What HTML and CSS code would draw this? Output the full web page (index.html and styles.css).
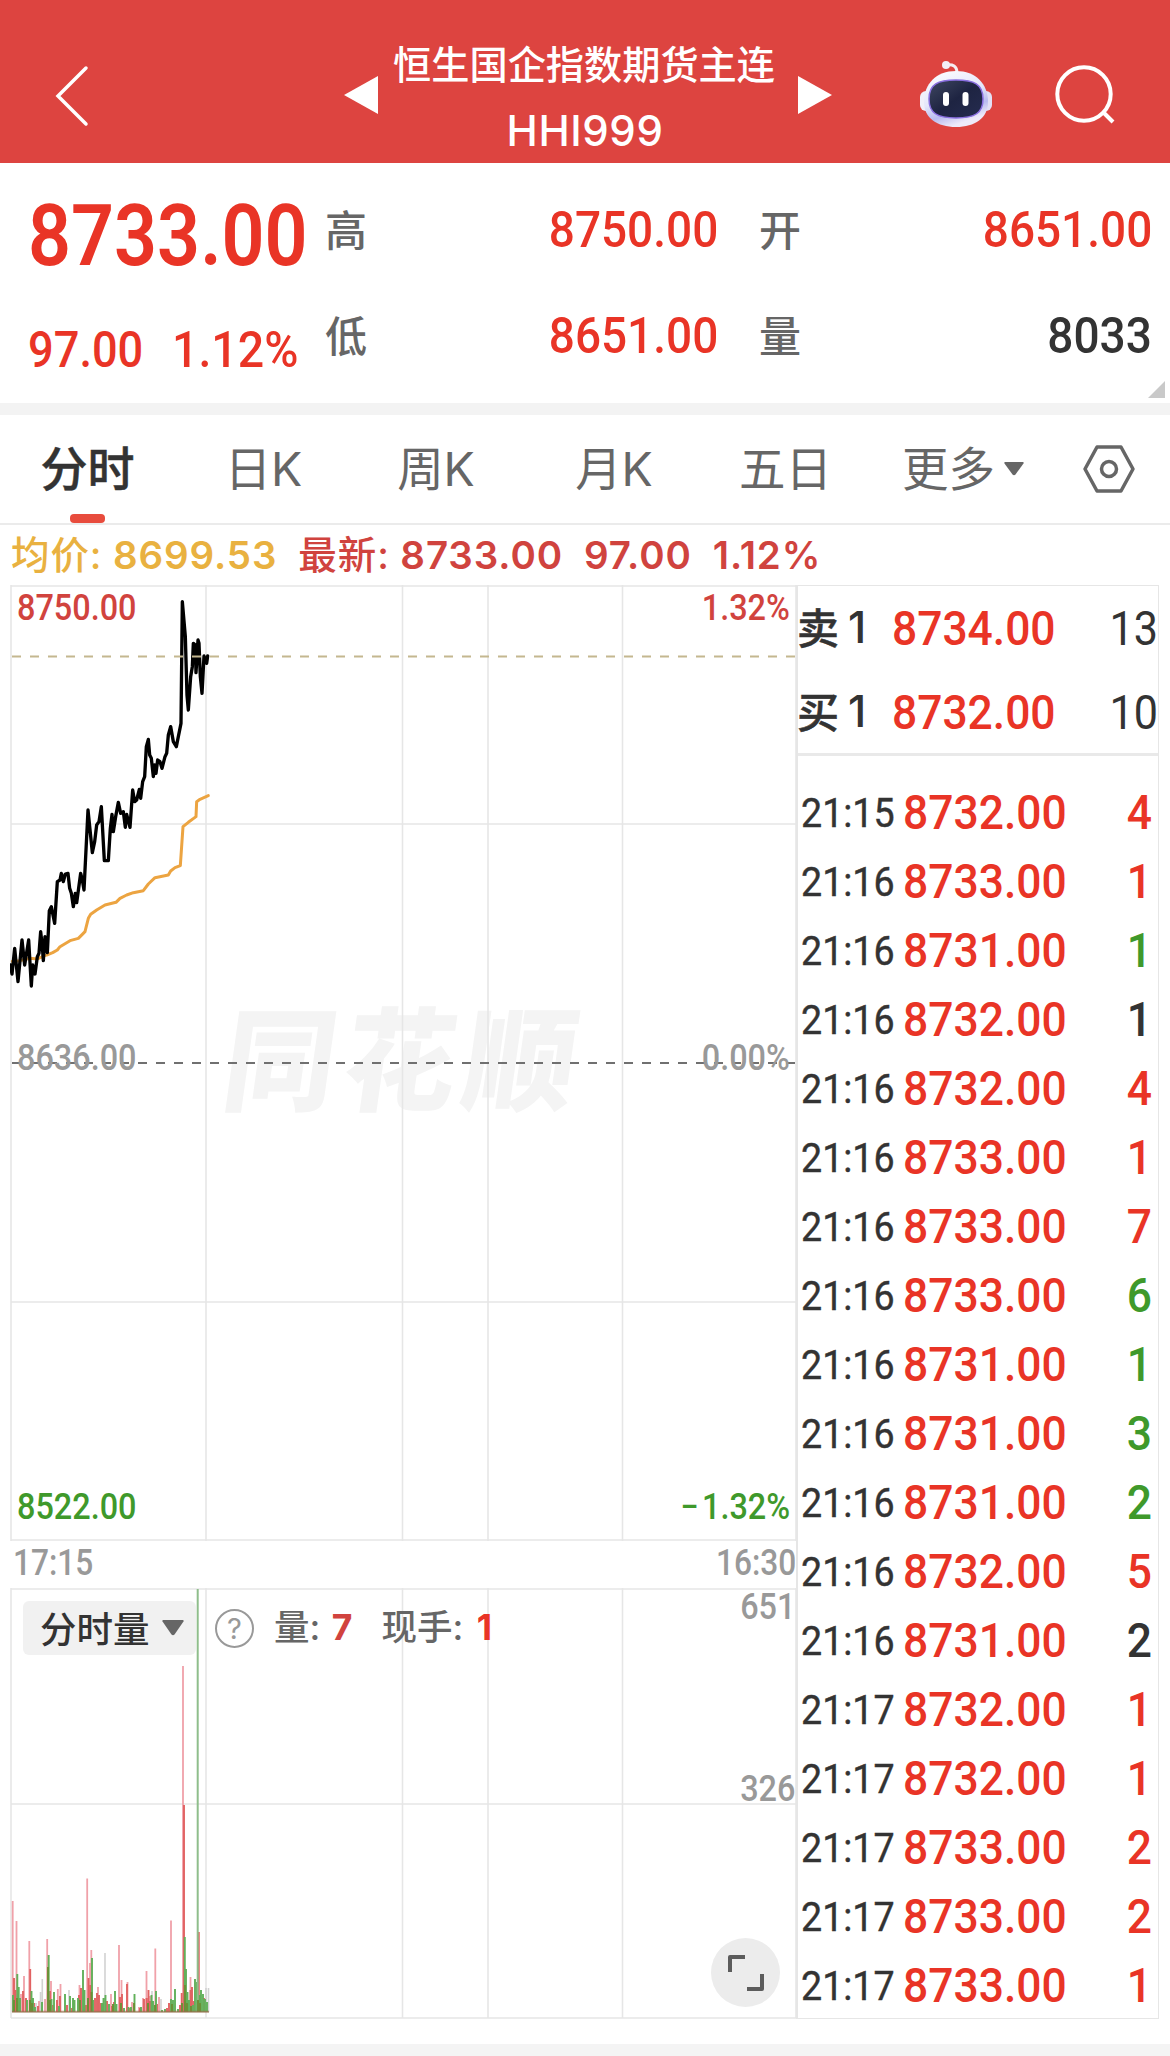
FILE: index.html
```html
<!DOCTYPE html>
<html lang="zh-CN">
<head>
<meta charset="utf-8">
<title>恒生国企指数期货主连</title>
<link rel="stylesheet" href="styles.css">
</head>
<body>
<header class="topbar">
  <svg class="back" width="36" height="64" viewBox="0 0 36 64"><path d="M32 4 4 32l28 28"/></svg>
  <svg class="tri prev" width="34" height="38" viewBox="0 0 34 38"><path d="M0 19 34 0v38z"/></svg>
  <div class="title"><h1>恒生国企指数期货主连</h1><p>HHI999</p></div>
  <svg class="tri next" width="34" height="38" viewBox="0 0 34 38"><path d="M34 19 0 0v38z"/></svg>
  <svg class="robot" width="74" height="70" viewBox="920 59 74 70">
    <defs>
      <linearGradient id="shell" x1="0" y1="0" x2="0.4" y2="1"><stop offset="0" stop-color="#fff"/><stop offset=".55" stop-color="#e4e6fa"/><stop offset=".8" stop-color="#b9bbef"/><stop offset="1" stop-color="#eeeafa"/></linearGradient>
      <linearGradient id="visor" x1="0" y1="0" x2="1" y2="1"><stop offset="0" stop-color="#3f4761"/><stop offset=".5" stop-color="#1e2442"/><stop offset="1" stop-color="#252c50"/></linearGradient>
    </defs>
    <path d="M947 65c7-1 11 1 11 8" fill="none" stroke="#f6eef2" stroke-width="3"/>
    <circle cx="947" cy="65" r="4" fill="#f3eff8"/>
    <rect x="921" y="91" width="12" height="20" rx="6" fill="#f0effa"/>
    <rect x="981" y="91" width="12" height="20" rx="6" fill="#e3e0f5"/>
    <path d="M957 71c20 0 32 13 32 31 0 16-13 25-32 25s-32-9-32-25c0-18 12-31 32-31z" fill="url(#shell)"/>
    <path d="M957 80c18 0 27 4 27 19 0 14-8 19-27 19s-27-5-27-19c0-15 9-19 27-19z" fill="url(#visor)" stroke="#8a6fe0" stroke-width="1.5"/>
    <rect x="944" y="92" width="6" height="14" rx="3" fill="#fff"/>
    <rect x="963.500" y="92" width="6" height="14" rx="3" fill="#fff"/>
  </svg>
  <svg class="search" width="62" height="62" viewBox="1056 65 62 62"><circle cx="1085" cy="94" r="26.700"/><path d="m1104 112 10 10"/></svg>
</header>

<section class="quote">
  <div class="last">
    <div class="price num red">8733.00</div>
    <div class="change"><span class="num mid red">97.00</span><span class="num mid red">1.12%</span></div>
  </div>
  <dl class="stats">
    <dt>高</dt><dd><span class="num mid red">8750.00</span></dd>
    <dt>开</dt><dd><span class="num mid red">8651.00</span></dd>
    <dt>低</dt><dd><span class="num mid red">8651.00</span></dd>
    <dt>量</dt><dd><span class="num mid">8033</span></dd>
  </dl>
  <i class="corner"></i>
</section>

<nav class="tabs">
  <span class="tab active">分时</span>
  <span class="tab">日K</span>
  <span class="tab">周K</span>
  <span class="tab">月K</span>
  <span class="tab">五日</span>
  <span class="tab more">更多<svg width="20" height="14" viewBox="0 0 20 14"><path d="M1 0h18q1 0 .5 1.500L11.500 12.500q-1.500 1.500-3 0L.5 1.500Q0 0 1 0z"/></svg></span>
  <svg class="settings" width="52" height="48" viewBox="0 0 52 48"><path d="M14 2h24l12 22-12 22H14L2 24z"/><circle cx="26" cy="24" r="7.500"/></svg>
</nav>

<div class="legend"><span class="avg"><b>均价:</b> 8699.53</span><span><b>最新:</b> 8733.00</span><span>97.00</span><span>1.12%</span></div>

<main class="board">
  <div class="charts">
    <div class="pricechart">
      <svg width="787" height="956" viewBox="10 585 787 956">
        <text class="watermark" x="0" y="0" transform="translate(219 1102) skewX(-8)" textLength="352">同花顺</text>
        <g class="grid"><path d="M11 586H796M11 824H796M11 1302H796M11 1540H796M11 585V1541M206 585V1541M402.500 585V1541M488 585V1541M622.500 585V1541M796 585V1541"/></g>
        <path class="mid-line" d="M12 1063H796"/>
        <g transform="translate(0 580) scale(.33333)">
          <path class="avg-line" d="M37 1144 60 1142 90 1135 112 1137 140 1125 158 1118 172 1110 180 1100 210 1082 235 1075 247 1063 255 1055 265 1015 272 1003 290 990 315 975 348 967 360 955 380 945 400 938 430 932 445 912 465 893 505 885 512 873 525 863 541 857 549 740 565 727 588 710 590 665 600 658 625 647"/>
          <path class="price-line" d="M31 1155 36 1182 44 1105 54 1205 66 1080 74 1155 86 1080 94 1218 98 1155 105 1182 112 1130 117 1120 122 1055 127 1100 130 1142 135 1070 142 1118 148 992 154 980 164 1030 172 905 180 900 184 880 190 905 196 882 204 880 209 925 214 940 220 980 226 940 230 968 242 880 247 900 252 930 264 690 277 818 284 785 290 735 297 725 304 680 313 842 325 842 331 745 336 703 340 755 347 710 355 667 362 700 370 695 376 742 380 703 390 742 398 630 404 665 410 660 418 628 422 655 428 605 434 590 439 500 445 478 449 525 454 535 460 590 464 555 468 580 473 540 480 545 486 565 495 530 500 520 505 465 512 440 520 485 529 500 535 470 543 430 547 65 556 170 561 345 565 390 572 290 577 260 580 190 586 195 588 278 594 180 597 190 601 290 606 340 612 228 620 250 623 228"/>
        </g>
        <path class="last-line" d="M12 656.500H796"/>
      </svg>
      <span class="num lab l1 crimson">8750.00</span><span class="num lab r1 crimson">1.32%</span>
      <span class="num lab l2 gray">8636.00</span><span class="num lab r2 gray">0.00%</span>
      <span class="num lab l3 green">8522.00</span><span class="num lab r3 green"><span class="minus">−</span>1.32%</span>
    </div>
    <div class="times gray"><span class="num lab">17:15</span><span class="num lab">16:30</span></div>
    <div class="volchart">
      <svg width="787" height="431" viewBox="10 1588 787 431">
        <g class="grid"><path d="M11 1589H796M11 1804H796M11 2018H796M11 1588V2018M206 1588V2018M402.500 1588V2018M488 1588V2018M622.500 1588V2018M796 1588V2018"/></g>
        <path stroke="#d2d2d2" stroke-width="1.600" d="M42.300 2012V1979M40.500 2012V1992M105 2012V1953M69 2012V1990M206 2012V1988M208.500 2012V1988M36 2012V2003M152 2012V1991M161 2012V1999"/>
        <path stroke="#f0a1a9" stroke-width="1.800" d="M12.700 2012V1901M16.500 2012V1921M24 2012V1976M29.300 2012V1941M47.200 2012V1939M51 2012V1981M57.800 2012V1989M60.500 2012V1984M79.500 2012V1985M87.200 2012V1878.500M90 2012V1963M91.300 2012V1950M98 2012V1987M119 2012V1945M121.500 2012V1980M127.500 2012V1982M132 2012V2002M146.500 2012V1971M155.300 2012V1948.500M150 2012V1996M143 2012V1998M159 2012V1997M171 2012V1920.500M183 2012V1666M190.500 2012V1977M21 2012V1994M111 2012V1994M139 2012V2007M39 2012V2001M45 2012V1999M201 2012V2000"/>
        <path stroke="#e16262" stroke-width="1.900" d="M14 2012V1978M15.500 2012V1990M23 2012V1991M26 2012V1998M30.200 2012V1969M34 2012V2003M38 2012V2006M50 2012V1991M53 2012V2005M57 2012V2000M60 2012V1996M67 2012V2005M72 2012V2008M79 2012V1995M81 2012V1988M86 2012V2005M88.500 2012V1978M90.500 2012V1985M95 2012V1998M97 2012V1993M99 2012V1995M101 2012V2003M107 2012V2001M112 2012V2006M114 2012V2002M120 2012V1997M122 2012V1994M127 2012V1984M130 2012V2008M140 2012V2008M144 2012V1999M146.500 2012V1998M148.500 2012V1990M150 2012V2001M157 2012V2004M167 2012V2008M169 2012V2003M180 2012V2005M181.700 2012V1993M184 2012V1805M190.500 2012V1990M192 2012V1987M194 2012V2001M198.800 2012V1932M204 2012V1998"/>
        <path stroke="#62b05a" stroke-width="1.900" d="M13 2012V1995M17.300 2012V1974M18.700 2012V1987M20 2012V1998M27 2012V2000M31.500 2012V1991M33 2012V1998M35 2012V2007M42 2012V2002M48.700 2012V1955M51.500 2012V1999M54 2012V1992M59 2012V2006M65 2012V1994M70 2012V1996M73 2012V1998M74.500 2012V2000M78 2012V1998M83 2012V1970M84.500 2012V1990M92 2012V1958M93 2012V2000M102 2012V2003M103.500 2012V1998M105.500 2012V1995M109 2012V2004M115 2012V1991M116.500 2012V2004M124 2012V2008M128.500 2012V2007M131 2012V2007M134.500 2012V1994M141 2012V2007M151.500 2012V1995M153 2012V2001M156 2012V1991M162 2012V2010M165 2012V2009M171 2012V1999M173 2012V2000M175 2012V1989M178 2012V2009M184.800 2012V1937M186 2012V1969M187.500 2012V1992M189 2012V2000M193 2012V2005M195 2012V1979M197 2012V1982M199.500 2012V1995M201 2012V1990M203 2012V1994M205 2012V1999M207 2012V2002"/>
        <path stroke="#8fbe8b" stroke-width="2" d="M197.700 2012V1589"/>
        <path stroke="#6c8f36" stroke-width="1.900" d="M14 2012V2000M17 2012V1998M30 2012V2000M32 2012V2003M48 2012V1967M50 2012V2000M80 2012V2000M88 2012V1998M91.500 2012V1992M113 2012V2004M121 2012V2003M134 2012V2003M148 2012V2003M155 2012V2005M172 2012V2004M182 2012V2003M185 2012V1985M187 2012V2003M191 2012V2006M198 2012V2000M200 2012V2003"/>
        <path stroke="#966f4c" stroke-width="2" d="M12 2011.700H209" opacity=".7"/>
      </svg>
      <div class="volbar">
        <span class="pill">分时量<svg width="22" height="16" viewBox="0 0 22 16"><path d="M1 0h20q1 0 .5 1.500L12.500 14.500q-1.500 1.500-3 0L.5 1.500Q0 0 1 0z"/></svg></span>
        <span class="help">?</span>
        <span class="vtext">量: <b class="crimson">7</b></span>
        <span class="vtext hand">现手: <b class="red">1</b></span>
      </div>
      <span class="num lab v1 gray">651</span><span class="num lab v2 gray">326</span>
      <span class="expand"><svg width="40" height="40" viewBox="0 0 40 40"><path d="M4 19V4h15M36 21v15H21"/></svg></span>
    </div>
  </div>
  <aside class="trades">
    <div class="depth">
      <div class="drow"><span class="side">卖</span><span class="lvl">1</span><span class="dp"><i class="num mid2 red">8734.00</i></span><i class="num qty">13</i></div>
      <div class="drow"><span class="side">买</span><span class="lvl">1</span><span class="dp"><i class="num mid2 red">8732.00</i></span><i class="num qty">10</i></div>
    </div>
    <div class="ticks">
      <div class="tick"><i class="num t">21:15</i><i class="num p">8732.00</i><i class="num q red">4</i></div>
      <div class="tick"><i class="num t">21:16</i><i class="num p">8733.00</i><i class="num q red">1</i></div>
      <div class="tick"><i class="num t">21:16</i><i class="num p">8731.00</i><i class="num q green">1</i></div>
      <div class="tick"><i class="num t">21:16</i><i class="num p">8732.00</i><i class="num q">1</i></div>
      <div class="tick"><i class="num t">21:16</i><i class="num p">8732.00</i><i class="num q red">4</i></div>
      <div class="tick"><i class="num t">21:16</i><i class="num p">8733.00</i><i class="num q red">1</i></div>
      <div class="tick"><i class="num t">21:16</i><i class="num p">8733.00</i><i class="num q red">7</i></div>
      <div class="tick"><i class="num t">21:16</i><i class="num p">8733.00</i><i class="num q green">6</i></div>
      <div class="tick"><i class="num t">21:16</i><i class="num p">8731.00</i><i class="num q green">1</i></div>
      <div class="tick"><i class="num t">21:16</i><i class="num p">8731.00</i><i class="num q green">3</i></div>
      <div class="tick"><i class="num t">21:16</i><i class="num p">8731.00</i><i class="num q green">2</i></div>
      <div class="tick"><i class="num t">21:16</i><i class="num p">8732.00</i><i class="num q red">5</i></div>
      <div class="tick"><i class="num t">21:16</i><i class="num p">8731.00</i><i class="num q">2</i></div>
      <div class="tick"><i class="num t">21:17</i><i class="num p">8732.00</i><i class="num q red">1</i></div>
      <div class="tick"><i class="num t">21:17</i><i class="num p">8732.00</i><i class="num q red">1</i></div>
      <div class="tick"><i class="num t">21:17</i><i class="num p">8733.00</i><i class="num q red">2</i></div>
      <div class="tick"><i class="num t">21:17</i><i class="num p">8733.00</i><i class="num q red">2</i></div>
      <div class="tick"><i class="num t">21:17</i><i class="num p">8733.00</i><i class="num q red">1</i></div>
    </div>
  </aside>
</main>
<footer class="foot"></footer>
</body>
</html>
```
FILE: styles.css
```css
* { box-sizing: border-box; }
body {
  margin: 0;
  width: 1170px;
  height: 2056px;
  overflow: hidden;
  background: #fff;
  color: #333;
  font-family: Inter, "Noto Sans CJK SC", sans-serif;
  display: flex;
  flex-direction: column;
}
h1, p, dl, dd { margin: 0; }
svg { display: block; flex: none; }
i { font-style: normal; }

.red { color: #e93426; }
.crimson { color: #d1433e; }
.green { color: #3f992b; }
.gray { color: #999; }

/* Condensed figures */
.num {
  display: inline-block;
  font-family: Roboto, sans-serif;
  font-weight: 500;
  white-space: nowrap;
  transform: scaleX(.91);
  transform-origin: 0 50%;
}

/* Header */
.topbar {
  flex: none;
  height: 163px;
  background: #dd4440;
  color: #fff;
  display: flex;
  align-items: flex-start;
}
.back { margin: 64px 0 0 54px; fill: none; stroke: #fff; stroke-width: 3.5; stroke-linecap: round; }
.tri { fill: #fff; margin-top: 76px; }
.prev { margin-left: 254px; }
.title { width: 420px; text-align: center; padding: 40px 6px 0 0; }
.title h1 { font: 500 38.2px/46px "Noto Sans CJK SC", sans-serif; margin: 0 -10px 0 -12px; }
.title p { font-size: 42px; line-height: 50px; font-weight: 550; margin-top: 20px; letter-spacing: .6px; }
.robot { margin: 59px 0 0 87px; }
.search { margin: 65px 0 0 62px; fill: none; stroke: #fff; stroke-width: 4; }

/* Quote */
.quote {
  flex: none;
  height: 252px;
  border-bottom: 12px solid #f3f3f3;
  display: flex;
  position: relative;
}
.last { width: 325px; padding: 22px 0 0 28px; }
.price { font-size: 86px; line-height: 101px; transform: scaleX(.876); font-weight: 600; }
.change { display: grid; grid-template-columns: 144px 1fr; margin-top: 35px; line-height: 58px; }
.mid { font-size: 50.5px; }
.change .mid { transform: scaleX(.895); }
.change .mid:last-child { transform: scaleX(.92); }
.stats {
  flex: 1;
  display: grid;
  grid-template-columns: 60px 333px 101px 333px;
  grid-template-rows: 106px 106px;
  padding-top: 14px;
}
.stats dt { font: 500 42px/102px "Noto Sans CJK SC", sans-serif; color: #666; }
.stats dt:nth-of-type(even) { padding-left: 41px; }
.stats dd { text-align: right; line-height: 106px; }
.stats .num { transform-origin: 100% 50%; }
.corner {
  position: absolute;
  right: 5px;
  bottom: 5px;
  border: solid transparent;
  border-width: 17px 0 0 17px;
  border-bottom: 17px solid #c9c9c9;
  border-top: 0;
}

/* Tabs */
.tabs {
  flex: none;
  height: 110px;
  border-bottom: 2px solid #ebebeb;
  display: grid;
  grid-template-columns: 175px 177px 168px 188px 155px 201px 106px;
  align-items: start;
}
.tab {
  font: 400 46.5px/108px Inter, "Noto Sans CJK SC", sans-serif;
  color: #666;
  text-align: center;
  position: relative;
}
.tab.active { font-weight: 500; font-size: 47px; color: #333; -webkit-text-stroke: .5px #333; }
.tab.active::after {
  content: "";
  position: absolute;
  left: 70px;
  bottom: 0;
  width: 35px;
  height: 9px;
  border-radius: 4px;
  background: #e84c3d;
}
.more { display: flex; align-items: center; padding-left: 39px; gap: 9px; }
.more svg, .pill svg { fill: #666; }
.settings { margin: 30px 0 0 19px; fill: none; stroke: #666; stroke-width: 3.5; stroke-linejoin: round; }

.legend {
  flex: none;
  height: 60px;
  padding-left: 11px;
  display: flex;
  gap: 21px;
  font-size: 38.5px;
  line-height: 61px;
  font-weight: 600;
  letter-spacing: .9px;
  color: #d0433e;
  white-space: pre;
}
.legend b { font-weight: 500; }
.avg { color: #e9b140; }

/* Board */
.board { flex: none; height: 1434px; display: flex; padding-left: 10px; }
.charts { width: 786px; display: flex; flex-direction: column; }
.pricechart, .volchart { position: relative; }
.pricechart { height: 956px; }
.volchart { height: 431px; }
.times { height: 47px; display: flex; justify-content: space-between; padding: 1px 0 0 3px; line-height: 47px; }
.times .num { transform: scaleX(.88); }
.times .lab:last-child { transform-origin: 100% 50%; }
.grid path { fill: none; stroke: #e6e6e6; stroke-width: 1.6; }
.mid-line { stroke: #707070; stroke-width: 2; stroke-dasharray: 9 9; fill: none; }
.last-line { stroke: #c4b78f; stroke-width: 2; stroke-dasharray: 9 9; fill: none; }
.avg-line, .price-line { fill: none; stroke-linejoin: round; stroke-linecap: round; }
.avg-line { stroke: #eca441; stroke-width: 9; }
.price-line { stroke: #000; stroke-width: 10; }
.watermark { font: 900 112px "Noto Sans CJK SC", sans-serif; fill: #f4f4f4; }

.lab { font-size: 36px; line-height: 42px; transform: scaleX(.9); }
.pricechart .lab, .volchart > .lab { position: absolute; }
.l1, .l2, .l3 { left: 7px; }
.r1, .r2, .r3 { right: 6px; transform-origin: 100% 50%; }
.l1, .r1 { top: 2px; }
.l2, .r2 { top: 452px; }
.l3, .r3 { top: 901px; }
.minus { margin-right: 4px; }
.v1, .v2 { right: 1px; transform-origin: 100% 50%; }
.v1 { top: -2px; }
.v2 { top: 180px; }

.volbar { position: absolute; left: 13px; top: 13px; display: flex; align-items: center; height: 54px; }
.pill {
  width: 173px;
  height: 54px;
  padding-left: 17px;
  border-radius: 6px;
  background: rgba(240, 240, 240, .95);
  display: flex;
  align-items: center;
  gap: 12px;
  font: 500 36.5px/54px "Noto Sans CJK SC", sans-serif;
}
.help {
  width: 39px;
  height: 39px;
  margin-left: 19px;
  border: 2.5px solid #999;
  border-radius: 50%;
  color: #999;
  font: 400 29px/35px Inter, sans-serif;
  text-align: center;
}
.vtext { margin-left: 20px; font: 500 35.5px/54px Inter, "Noto Sans CJK SC", sans-serif; color: #666; }
.vtext b { font-weight: 700; margin-left: 2px; }
.hand { margin-left: 29px; }
.hand b { margin-left: 4px; }
.expand {
  position: absolute;
  left: 701px;
  top: 350px;
  width: 69px;
  height: 69px;
  border-radius: 50%;
  background: #ececec;
  display: grid;
  place-items: center;
}
.expand path { fill: none; stroke: #5c5c5c; stroke-width: 4; stroke-linejoin: round; }

/* Trades */
.trades { width: 363px; border: 1.6px solid #e6e6e6; border-left-width: 2px; height: 1434px; }
.depth { height: 170px; border-bottom: 3px solid #e9e9e9; }
.drow { display: grid; grid-template-columns: 50px 44px 1fr auto; height: 84px; line-height: 86px; }
.side { font: 500 42px/79px "Noto Sans CJK SC", sans-serif; margin-left: -1px; -webkit-text-stroke: .5px #333; }
.lvl { font: 500 44px/83px Inter, sans-serif; }
.mid2 { font-size: 49px; transform: scaleX(.905); }
.qty { font-size: 49px; transform-origin: 100% 50%; transform: scaleX(.88); font-weight: 450; }
.ticks { padding-top: 22.5px; }
.tick { height: 69.03px; display: grid; grid-template-columns: 102px 1fr auto; padding: 0 6px 0 3px; line-height: 69px; }
.t { font-size: 40px; transform: scaleX(.94); font-weight: 450; -webkit-text-stroke: .4px #333; }
.p { font-size: 47.5px; transform: scaleX(.935); color: #e93426; }
.q { font-size: 47.5px; transform: scaleX(.935); transform-origin: 100% 50%; }

.foot { flex: none; margin-top: 25px; height: 12px; background: #f4f4f4; }
```
